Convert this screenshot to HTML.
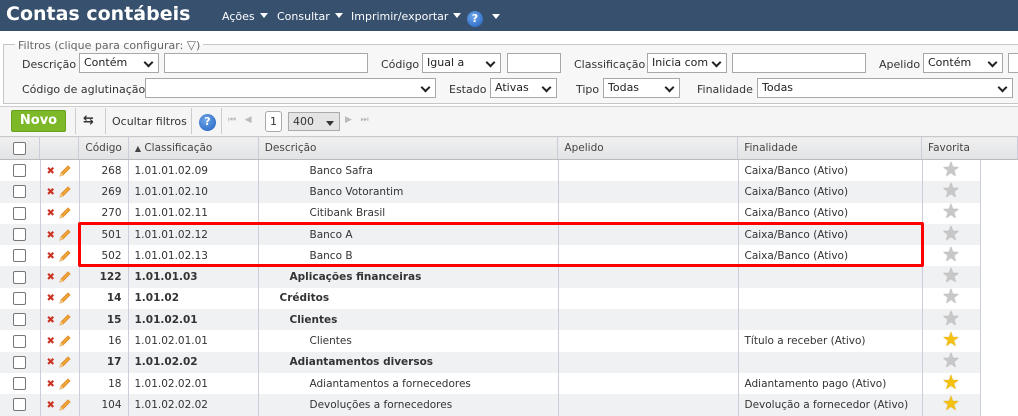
<!DOCTYPE html><html><head><meta charset="utf-8"><style>
*{box-sizing:border-box;margin:0;padding:0}
body{width:1018px;height:402px;overflow:hidden;background:#fff;font-family:"DejaVu Sans",sans-serif;font-size:10.5px;color:#333;position:relative}
.abs{position:absolute}
.top{left:0;top:0;width:1018px;height:31px;background:#36506d}
.title{left:6px;top:3px;color:#fff;font:bold 19px "DejaVu Sans",sans-serif}
.menu{top:10px;color:#fff;font-size:11px}
.tri{display:inline-block;width:0;height:0;border-left:4px solid transparent;border-right:4px solid transparent;border-top:5px solid #fff;margin-left:5px;vertical-align:2px}
.help{width:16px;height:16px;border-radius:50%;background:radial-gradient(circle at 40% 35%,#6ea6e8,#1f5fbf);color:#fff;font:bold 11px "DejaVu Sans";text-align:center;line-height:16px}
.fs{left:3px;top:44px;width:1020px;height:60px;border:1px solid #c6c6c6;background:#f7f7f7}
.leg{left:15px;top:38px;padding:0 3px;color:#666;font-size:11px;background:linear-gradient(#fff 50%,#f7f7f7 50%)}
.lbl{font-size:11px;color:#333}
.sel,.inp{position:absolute;height:20px;border:1px solid #a8a8a8;background:#fff;font-size:11px;padding:2px 4px;color:#222}
.sel:after{content:"";position:absolute;right:6px;top:5px;width:5px;height:5px;border-right:2px solid #222;border-bottom:2px solid #222;transform:rotate(45deg)}
.tb{left:0;top:106px;width:1018px;height:30px;background:#f5f5f5;border-top:1px solid #ccc}
.novo{left:11px;top:110px;width:55px;height:22px;background:#7db828;border:1px solid #6aa01f;border-radius:2px;color:#fff;font:bold 13px "DejaVu Sans";text-align:center;line-height:20px}
.vs{top:108px;width:1px;height:26px;background:#ccc}
table{position:absolute;left:0;top:136px;border-collapse:collapse;table-layout:fixed}
td,th{height:21.3px;border-right:1px solid #ccd;padding:0 6px;white-space:nowrap;overflow:hidden;font-weight:normal;text-align:left}
th{background:linear-gradient(#f0f0f0,#e2e3e5);border-bottom:1px solid #bbb;border-top:1px solid #c8c8c8;color:#444;height:23px}
tr.g td{background:#f0f1f3}
td.r{text-align:right}
.b{font-weight:bold}
.cb{display:inline-block;width:13px;height:13px;border:1px solid #777;border-radius:2px;background:#fff;vertical-align:middle}
.x{color:#c32;font-weight:bold;font-size:10px}
.star{font-size:20px;line-height:12px;color:#c8c8c8;text-shadow:0 0 1px #777}
.ys{color:#f5c10f;text-shadow:0 0 1px #b80}
.pen{display:inline-block;vertical-align:middle;margin-left:3px}
</style></head><body>
<svg width="0" height="0" style="position:absolute"><defs><symbol id="p" viewBox="0 0 14 14"><path d="M2 12 L3 9 L10 2 L12 4 L5 11 Z" fill="#f2a33a" stroke="#d98a1f" stroke-width="0.8"/><path d="M2 12 L3 9 L5 11 Z" fill="#f6d7a0"/></symbol></defs></svg>
<div class="abs top"></div>
<div class="abs title">Contas contábeis</div>
<div class="abs menu" style="left:222px">Ações<span class="tri"></span></div>
<div class="abs menu" style="left:277px">Consultar<span class="tri"></span></div>
<div class="abs menu" style="left:351px">Imprimir/exportar<span class="tri"></span></div>
<div class="abs help" style="left:467px;top:11px">?</div>
<div class="abs" style="left:492px;top:14px;border-left:4px solid transparent;border-right:4px solid transparent;border-top:5px solid #fff"></div>
<div class="abs fs"></div>
<div class="abs leg">Filtros (clique para configurar: <span style="font-size:12px">▽</span>)</div>
<div class="abs lbl" style="left:22px;top:58px">Descrição</div>
<div class="sel" style="left:79px;top:53px;width:80px">Contém</div>
<div class="inp" style="left:164px;top:53px;width:204px"></div>
<div class="abs lbl" style="left:381px;top:58px">Código</div>
<div class="sel" style="left:422px;top:53px;width:79px">Igual a</div>
<div class="inp" style="left:507px;top:53px;width:54px"></div>
<div class="abs lbl" style="left:574px;top:58px">Classificação</div>
<div class="sel" style="left:647px;top:53px;width:80px">Inicia com</div>
<div class="inp" style="left:732px;top:53px;width:134px"></div>
<div class="abs lbl" style="left:879px;top:58px">Apelido</div>
<div class="sel" style="left:923px;top:53px;width:80px">Contém</div>
<div class="inp" style="left:1008px;top:53px;width:20px"></div>
<div class="abs lbl" style="left:22px;top:83px">Código de aglutinação</div>
<div class="sel" style="left:145px;top:78px;width:291px"></div>
<div class="abs lbl" style="left:449px;top:83px">Estado</div>
<div class="sel" style="left:490px;top:78px;width:67px">Ativas</div>
<div class="abs lbl" style="left:576px;top:83px">Tipo</div>
<div class="sel" style="left:603px;top:78px;width:77px">Todas</div>
<div class="abs lbl" style="left:697px;top:83px">Finalidade</div>
<div class="sel" style="left:757px;top:78px;width:256px">Todas</div>
<div class="abs tb"></div>
<div class="abs novo">Novo</div>
<div class="abs vs" style="left:75px"></div>
<div class="abs" style="left:83px;top:113px;font-size:13px;font-weight:bold">⇆</div>
<div class="abs vs" style="left:105px"></div>
<div class="abs lbl" style="left:112px;top:115px">Ocultar filtros</div>
<div class="abs vs" style="left:191px"></div>
<div class="abs help" style="left:199px;top:114px;width:17px;height:17px">?</div>
<div class="abs vs" style="left:221px"></div>
<div class="abs" style="left:228px;top:115px;color:#bbb;font-size:9px">⏮&nbsp;&nbsp;&nbsp;◀</div>
<div class="abs" style="left:265px;top:111px;width:17px;height:21px;border:1px solid #aaa;border-radius:3px;background:#fff;font-size:11px;text-align:center;line-height:19px">1</div>
<div class="abs" style="left:288px;top:112px;width:52px;height:19px;border:1px solid #aaa;background:#e4e4e4;font-size:11px;padding:2px 4px">400<span style="position:absolute;right:5px;top:8px;border-left:4px solid transparent;border-right:4px solid transparent;border-top:5px solid #333"></span></div>
<div class="abs" style="left:345px;top:115px;color:#bbb;font-size:9px">▶&nbsp;&nbsp;&nbsp;⏭</div>
<table>
<colgroup><col style="width:40px"><col style="width:39px"><col style="width:49px"><col style="width:130px"><col style="width:300px"><col style="width:180px"><col style="width:184px"><col style="width:96px"></colgroup>
<tr><th style="text-align:center"><span class="cb"></span></th><th></th><th>Código</th><th><span style="font-size:8px">▲</span> Classificação</th><th>Descrição</th><th>Apelido</th><th>Finalidade</th><th>Favorita</th></tr>
</table>
<table style="top:160px">
<colgroup><col style="width:40px"><col style="width:39px"><col style="width:49px"><col style="width:130px"><col style="width:300px"><col style="width:180px"><col style="width:184px"><col style="width:58px"></colgroup>
<tr><td style="text-align:center"><span class="cb"></span></td><td><span class="x">✖</span><svg class="pen" width="14" height="14"><use href="#p"/></svg></td><td class="r">268</td><td>1.01.01.02.09</td><td style="padding-left:51px">Banco Safra</td><td></td><td>Caixa/Banco (Ativo)</td><td style="text-align:center"><span class="star">★</span></td></tr>
<tr class="g"><td style="text-align:center"><span class="cb"></span></td><td><span class="x">✖</span><svg class="pen" width="14" height="14"><use href="#p"/></svg></td><td class="r">269</td><td>1.01.01.02.10</td><td style="padding-left:51px">Banco Votorantim</td><td></td><td>Caixa/Banco (Ativo)</td><td style="text-align:center"><span class="star">★</span></td></tr>
<tr><td style="text-align:center"><span class="cb"></span></td><td><span class="x">✖</span><svg class="pen" width="14" height="14"><use href="#p"/></svg></td><td class="r">270</td><td>1.01.01.02.11</td><td style="padding-left:51px">Citibank Brasil</td><td></td><td>Caixa/Banco (Ativo)</td><td style="text-align:center"><span class="star">★</span></td></tr>
<tr class="g"><td style="text-align:center"><span class="cb"></span></td><td><span class="x">✖</span><svg class="pen" width="14" height="14"><use href="#p"/></svg></td><td class="r">501</td><td>1.01.01.02.12</td><td style="padding-left:51px">Banco A</td><td></td><td>Caixa/Banco (Ativo)</td><td style="text-align:center"><span class="star">★</span></td></tr>
<tr><td style="text-align:center"><span class="cb"></span></td><td><span class="x">✖</span><svg class="pen" width="14" height="14"><use href="#p"/></svg></td><td class="r">502</td><td>1.01.01.02.13</td><td style="padding-left:51px">Banco B</td><td></td><td>Caixa/Banco (Ativo)</td><td style="text-align:center"><span class="star">★</span></td></tr>
<tr class="g"><td style="text-align:center"><span class="cb"></span></td><td><span class="x">✖</span><svg class="pen" width="14" height="14"><use href="#p"/></svg></td><td class="r b">122</td><td class="b">1.01.01.03</td><td class="b" style="padding-left:31px">Aplicações financeiras</td><td></td><td></td><td style="text-align:center"><span class="star">★</span></td></tr>
<tr><td style="text-align:center"><span class="cb"></span></td><td><span class="x">✖</span><svg class="pen" width="14" height="14"><use href="#p"/></svg></td><td class="r b">14</td><td class="b">1.01.02</td><td class="b" style="padding-left:21px">Créditos</td><td></td><td></td><td style="text-align:center"><span class="star">★</span></td></tr>
<tr class="g"><td style="text-align:center"><span class="cb"></span></td><td><span class="x">✖</span><svg class="pen" width="14" height="14"><use href="#p"/></svg></td><td class="r b">15</td><td class="b">1.01.02.01</td><td class="b" style="padding-left:31px">Clientes</td><td></td><td></td><td style="text-align:center"><span class="star">★</span></td></tr>
<tr><td style="text-align:center"><span class="cb"></span></td><td><span class="x">✖</span><svg class="pen" width="14" height="14"><use href="#p"/></svg></td><td class="r">16</td><td>1.01.02.01.01</td><td style="padding-left:51px">Clientes</td><td></td><td>Título a receber (Ativo)</td><td style="text-align:center"><span class="star ys">★</span></td></tr>
<tr class="g"><td style="text-align:center"><span class="cb"></span></td><td><span class="x">✖</span><svg class="pen" width="14" height="14"><use href="#p"/></svg></td><td class="r b">17</td><td class="b">1.01.02.02</td><td class="b" style="padding-left:31px">Adiantamentos diversos</td><td></td><td></td><td style="text-align:center"><span class="star">★</span></td></tr>
<tr><td style="text-align:center"><span class="cb"></span></td><td><span class="x">✖</span><svg class="pen" width="14" height="14"><use href="#p"/></svg></td><td class="r">18</td><td>1.01.02.02.01</td><td style="padding-left:51px">Adiantamentos a fornecedores</td><td></td><td>Adiantamento pago (Ativo)</td><td style="text-align:center"><span class="star ys">★</span></td></tr>
<tr class="g"><td style="text-align:center"><span class="cb"></span></td><td><span class="x">✖</span><svg class="pen" width="14" height="14"><use href="#p"/></svg></td><td class="r">104</td><td>1.01.02.02.02</td><td style="padding-left:51px">Devoluções a fornecedores</td><td></td><td>Devolução a fornecedor (Ativo)</td><td style="text-align:center"><span class="star ys">★</span></td></tr>
</table>
<div class="abs" style="left:78px;top:222px;width:846px;height:45px;border:3px solid #f00;border-radius:2px"></div>
</body></html>
